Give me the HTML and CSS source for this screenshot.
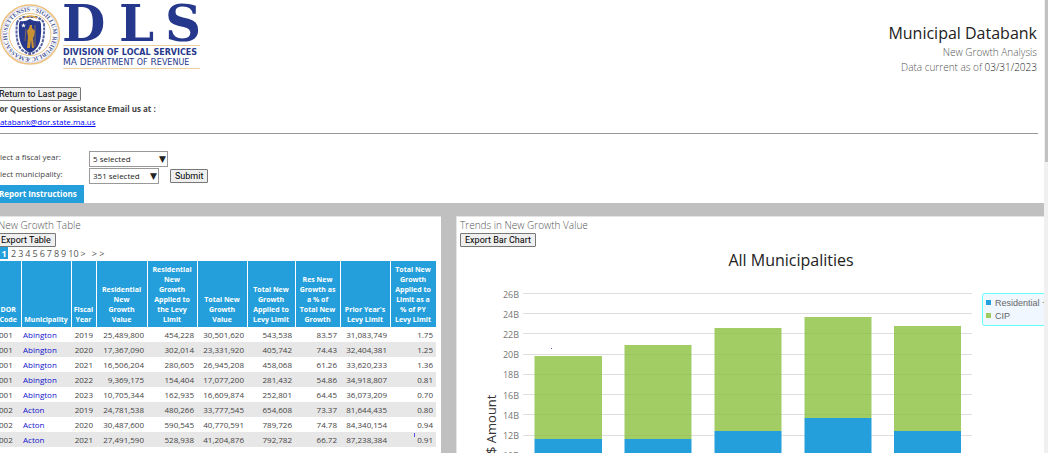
FILE: index.html
```html
<!DOCTYPE html>
<html lang="en">
<head>
<meta charset="utf-8">
<title>Municipal Databank - New Growth Analysis</title>
<link rel="stylesheet" href="styles.css">
</head>
<body>
<div class="frame">
<main class="page">
  <header class="masthead">
    <svg class="logo" width="204" height="72" viewBox="0 0 204 72" role="img" aria-label="Division of Local Services">
      <defs><path id="ring" d="M25 56.900A23 23 0 1 1 35 56.900A23 23 0 0 1 25 56.900"/></defs>
      <circle cx="30" cy="34.500" r="29.500" fill="#fff" stroke="#ecc17f" stroke-width="1.500"/>
      <circle cx="30" cy="34.500" r="28" fill="none" stroke="#a8afd0" stroke-width=".5"/>
      <circle cx="30" cy="34.500" r="21" fill="none" stroke="#eac17f" stroke-width="1"/>
      <path d="M17 23q1-4 7-6h12q6 2 8 6 1 19-5 26-4 4-9 5-5-1-9-5-6-8-4-26z" fill="#fff" stroke="#5361a0" stroke-width="2" stroke-dasharray="3 1"/>
      <path d="M20 21q5 1 10-2 5 3 10 2l1 3q1 15-3 22-3 5-8 7-5-2-8-7-4-7-3-22z" fill="#26388c"/>
      <path d="M24 18q6-4 13 0" fill="none" stroke="#d9a448" stroke-width="1.500"/>
      <path d="M30 25h2v3l3 3-1 5-1 2 1 10h-2l-1-8-1 8h-3l1-11-1-6 2-3z" fill="#c69034"/>
      <path d="M35 25v22M26 29l-1 12" stroke="#ad8241" stroke-width=".7"/>
      <path d="m23.500 23 .7 1.700h1.800l-1.500 1.100.6 1.700-1.600-1-1.600 1 .6-1.700-1.500-1.100h1.800z" fill="#fff"/>
      <text class="seal-text"><textPath href="#ring">MASSACHUSETTENSIS · SIGILLUM REIPUBLICÆ</textPath></text>
      <text class="logo-name" y="41" x="62 119 165">DLS</text>
      <path d="M63 45.500h137M63 68.500h137" stroke="#ecd19d"/>
      <text class="logo-line strong" x="63" y="55">DIVISION OF LOCAL SERVICES</text>
      <text class="logo-line" x="63" y="65">MA D<tspan class="cap">EPARTMENT OF</tspan> R<tspan class="cap">EVENUE</tspan></text>
    </svg>
    <div class="titles">
      <h1>Municipal Databank</h1>
      <p>New Growth Analysis</p>
      <p>Data current as of <span>03/31/2023</span></p>
    </div>
  </header>
  <section class="contact">
    <button type="button">Return to Last page</button>
    <p class="ask">For Questions or Assistance Email us at :</p>
    <a href="mailto:databank@dor.state.ma.us">databank@dor.state.ma.us</a>
  </section>
  <form class="filters">
    <div class="field">
      <label for="year">Select a fiscal year:</label>
      <span class="drop wide"><select id="year"><option>5 selected</option></select><i>▼</i></span>
    </div>
    <div class="field">
      <label for="town">Select municipality:</label>
      <span class="drop"><select id="town"><option>351 selected</option></select><i>▼</i></span>
      <button type="button">Submit</button>
    </div>
  </form>
  <a class="tab" href="#instructions">Report Instructions</a>
  <div class="panels">
    <section class="panel table-panel">
      <h2>New Growth Table</h2>
      <button type="button">Export Table</button>
      <nav class="pager"><b>1</b><span>2</span><span>3</span><span>4</span><span>5</span><span>6</span><span>7</span><span>8</span><span>9</span><span>10</span><span>&gt;</span><span class="last">&gt;&nbsp;&gt;</span></nav>
      <table>
        <colgroup><col class="c-code"><col class="c-town"><col class="c-year"><col class="c-res"><col class="c-mid"><col class="c-mid"><col class="c-app"><col class="c-pct"><col class="c-mid"><col class="c-last"></colgroup>
        <thead><tr><th>DOR<br>Code</th><th>Municipality</th><th>Fiscal<br>Year</th><th>Residential<br>New<br>Growth<br>Value</th><th>Residential<br>New<br>Growth<br>Applied to<br>the Levy<br>Limit</th><th>Total New<br>Growth<br>Value</th><th>Total New<br>Growth<br>Applied to<br>Levy Limit</th><th>Res New<br>Growth as<br>a % of<br>Total New<br>Growth</th><th>Prior Year's<br>Levy Limit</th><th>Total New<br>Growth<br>Applied to<br>Limit as a<br>% of PY<br>Levy Limit</th></tr></thead>
        <tbody>
          <tr><td>001</td><td><a href="#a">Abington</a></td><td>2019</td><td>25,489,800</td><td>454,228</td><td>30,501,620</td><td>543,538</td><td>83.57</td><td>31,083,749</td><td>1.75</td></tr>
          <tr><td>001</td><td><a href="#a">Abington</a></td><td>2020</td><td>17,367,090</td><td>302,014</td><td>23,331,920</td><td>405,742</td><td>74.43</td><td>32,404,381</td><td>1.25</td></tr>
          <tr><td>001</td><td><a href="#a">Abington</a></td><td>2021</td><td>16,506,204</td><td>280,605</td><td>26,945,208</td><td>458,068</td><td>61.26</td><td>33,620,233</td><td>1.36</td></tr>
          <tr><td>001</td><td><a href="#a">Abington</a></td><td>2022</td><td>9,369,175</td><td>154,404</td><td>17,077,200</td><td>281,432</td><td>54.86</td><td>34,918,807</td><td>0.81</td></tr>
          <tr><td>001</td><td><a href="#a">Abington</a></td><td>2023</td><td>10,705,344</td><td>162,935</td><td>16,609,874</td><td>252,801</td><td>64.45</td><td>36,073,209</td><td>0.70</td></tr>
          <tr><td>002</td><td><a href="#b">Acton</a></td><td>2019</td><td>24,781,538</td><td>480,266</td><td>33,777,545</td><td>654,608</td><td>73.37</td><td>81,644,435</td><td>0.80</td></tr>
          <tr><td>002</td><td><a href="#b">Acton</a></td><td>2020</td><td>30,487,600</td><td>590,545</td><td>40,770,591</td><td>789,726</td><td>74.78</td><td>84,340,154</td><td>0.94</td></tr>
          <tr><td>002</td><td><a href="#b">Acton</a></td><td>2021</td><td>27,491,590</td><td>528,938</td><td>41,204,876</td><td>792,782</td><td>66.72</td><td>87,238,384</td><td class="marked">0.91</td></tr>
          <tr><td>002</td><td><a href="#b">Acton</a></td><td>2022</td><td>33,356,882</td><td>653,543</td><td>51,108,188</td><td>1,042,234</td><td>62.70</td><td>90,213,436</td><td>1.15</td></tr>
        </tbody>
      </table>
    </section>
    <section class="panel chart-panel">
      <h2>Trends in New Growth Value</h2>
      <button type="button">Export Bar Chart</button>
      <svg class="chart" viewBox="457 247 587 220" role="img" aria-label="New growth for all municipalities">
        <text class="chart-title" x="791" y="266">All Municipalities</text>
        <path d="M523 293.500h449M523 313.500h449M523 333.500h449M523 354.500h449M523 374.500h449M523 394.500h449M523 414.500h449M523 435.500h449M523 455.500h449" stroke="#dedede"/>
        <g fill="#8bc03f" fill-opacity=".8">
          <path d="M534.500 356h67.500v83h-67.500zM624.500 345h67v94h-67zM714.500 328h67v103h-67zM804.500 317h67v101h-67zM894 326h67v105h-67z"/>
        </g>
        <path fill="#259fdb" d="M534.500 439h67.500v27h-67.500zM624.500 439h67v27h-67zM714.500 431h67v35h-67zM804.500 418h67v48h-67zM894 431h67v35h-67z"/>
        <g class="tick"><text x="519" y="298">26B</text><text x="519" y="318">24B</text><text x="519" y="338">22B</text><text x="519" y="358">20B</text><text x="519" y="378">18B</text><text x="519" y="399">16B</text><text x="519" y="419">14B</text><text x="519" y="439">12B</text><text x="519" y="459">10B</text></g>
        <text class="axis" transform="rotate(-90 496 454)" x="496" y="454">$ Amount</text>
        <rect x="551" y="348" width="1" height="1" fill="#55a"/>
        <rect x="982.500" y="293.500" width="80" height="32" rx="2" fill="#f0f7ff" stroke="#6ff"/>
        <path d="M986 300h5v5h-5z" fill="#259fdb"/><path d="M986 313h5v5h-5z" fill="#a0cb62"/>
        <g class="legend"><text x="995" y="306">Residential + Open Space</text><text x="995" y="319">CIP</text></g>
      </svg>
    </section>
  </div>
</main>
<div class="scroll"><div class="thumb"></div></div>
</div>
</body>
</html>
```
FILE: styles.css
```css
* { box-sizing: border-box; }
body { margin: 0; color: #444; background: #fff; font: 8px/12px "Open Sans", "Noto Sans", sans-serif; }
h1, h2, p { margin: 0; font-weight: 300; }
a { color: #00f; }
button { display: block; height: 14px; padding: 0 4px; border: 1px solid #777; border-radius: 1px; background: #efefef; color: #000; font: 9px/11px Roboto, Arial, sans-serif; }

.frame { display: flex; height: 100vh; overflow: hidden; }
.page { flex: 1; min-width: 0; margin-left: -9px; overflow: hidden; }
.scroll { width: 4px; flex: none; background: #f0f0f0; }
.thumb { height: 162px; margin-left: 1px; background: #c1c1c1; }

.masthead { display: flex; justify-content: space-between; align-items: flex-start; height: 87px; padding: 0 7px 0 9px; }
.logo { flex: none; }
.logo-name { font: bold 50px "DejaVu Serif", serif; fill: #26388c; }
.logo-line { font: 9px "DejaVu Sans", sans-serif; fill: #26388c; }
.strong { font-size: 8px; font-weight: 700; }
.cap { font-size: 8px; }
.seal-text { font: bold 6px "Liberation Serif", serif; fill: #4a5898; }
.titles { padding-top: 22px; text-align: right; color: #555; font-size: 10px; line-height: 15px; }
.titles h1 { color: #222; font-size: 16px; line-height: 23px; font-weight: 400; }
.titles span { color: #222; }

.contact { margin: 0 6px 0 4px; padding-bottom: 5px; border-bottom: 1px solid #999; }
.contact button { padding: 0 3px; }
.ask { padding-top: 1px; font-weight: 700; line-height: 13px; }
.contact a { display: block; line-height: 13px; }

.filters { display: grid; gap: 1px; padding: 17px 0 1px; }
.field { display: flex; align-items: center; height: 16px; }
.field label { width: 98px; padding-bottom: 4px; }
.field button { margin-left: 11px; }
.drop { position: relative; width: 70px; height: 16px; }
.wide { width: 79px; }
.drop select { width: 100%; height: 100%; padding: 0 3px; border: 1px solid #999; border-radius: 0; appearance: none; background: #fff; color: #222; font: 8px/14px "Open Sans", sans-serif; }
.drop i { position: absolute; right: 2px; top: 2px; pointer-events: none; color: #222; font: 9px/12px "DejaVu Sans", sans-serif; }
.tab { display: block; width: fit-content; padding: 0 7px 0 8px; background: #259fdb; color: #fff; font-weight: 700; line-height: 18px; text-decoration: none; }

.panels { display: grid; grid-template-columns: 450px 1fr; gap: 15px; padding-top: 13px; background: #c0c0c0; }
.panel { min-width: 0; background: #fff; border-top: 1px solid #e4e4e4; }
.panel h2 { color: #555; font-size: 10px; line-height: 16px; }
.table-panel { padding-left: 5px; }
.table-panel h2 { padding-left: 2px; }
.chart-panel { border-left: 1px solid #e4e4e4; }
.chart-panel h2, .chart-panel button { margin-left: 3px; }

.pager { display: flex; gap: 2px; height: 14px; padding-left: 4px; font-size: 9px; line-height: 13px; color: #555; }
.pager b { width: 8px; height: 12px; margin-right: 1px; text-align: center; background: #259fdb; color: #fff; }
.pager .last { margin-left: 4px; }

table { width: 440px; table-layout: fixed; border-collapse: collapse; font-size: 7px; line-height: 10px; }
.c-code { width: 25px; }
.c-town { width: 50px; }
.c-year { width: 25px; }
.c-res { width: 51px; }
.c-mid { width: 50px; }
.c-app { width: 48px; }
.c-pct { width: 45px; }
.c-last { width: 46px; }
th { height: 66px; padding: 2px 1px; border-right: 1px solid #fff; background: #259fdb; color: #fff; vertical-align: bottom; font-weight: 700; }
td { height: 15px; padding: 0 3px; text-align: right; color: #444; font-size: 8px; }
td:nth-child(1), td:nth-child(2) { text-align: left; padding: 0 2px; }
td:nth-child(1) { padding-left: 3px; }
td a { color: #11c; text-decoration: none; }
tbody tr:nth-child(even) { background: #e7e7e7; }
.marked { background: linear-gradient(#55e, #55e) 24px 1px / 1px 4px no-repeat; }

.chart { display: block; width: 100%; height: auto; }
.chart-title { font-size: 16px; text-anchor: middle; fill: #222; }
.tick { font-size: 9px; text-anchor: end; fill: #777; }
.axis { font-size: 13px; fill: #333; }
.legend { font: 9px "Liberation Sans", sans-serif; fill: #666; }
```
